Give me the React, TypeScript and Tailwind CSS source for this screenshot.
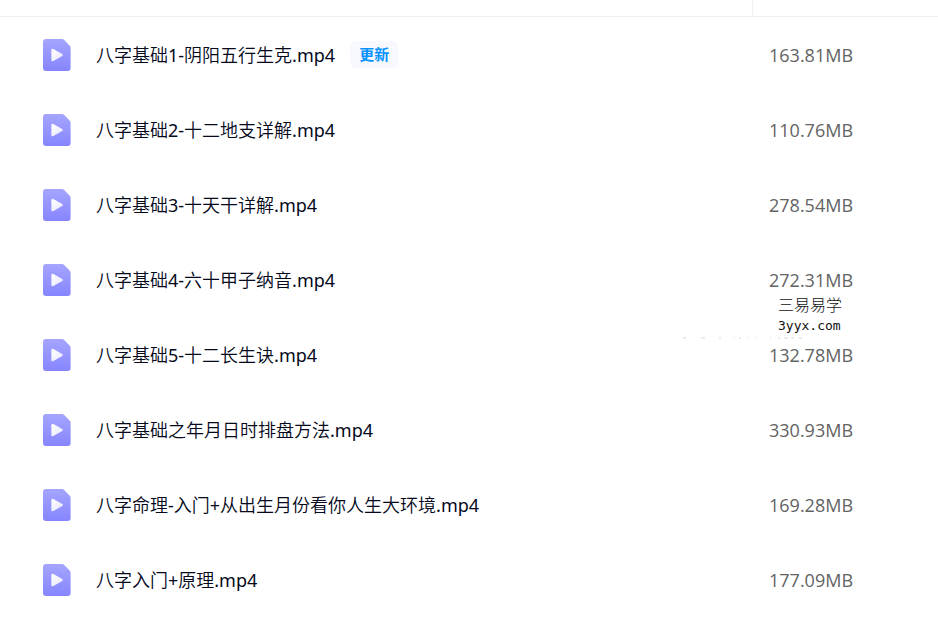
import React from 'react';

interface VideoFile {
  name: string;
  size: string;
  updated?: boolean;
}

const files: VideoFile[] = [
  { name: '八字基础1-阴阳五行生克.mp4', size: '163.81MB', updated: true },
  { name: '八字基础2-十二地支详解.mp4', size: '110.76MB' },
  { name: '八字基础3-十天干详解.mp4', size: '278.54MB' },
  { name: '八字基础4-六十甲子纳音.mp4', size: '272.31MB' },
  { name: '八字基础5-十二长生诀.mp4', size: '132.78MB' },
  { name: '八字基础之年月日时排盘方法.mp4', size: '330.93MB' },
  { name: '八字命理-入门+从出生月份看你人生大环境.mp4', size: '169.28MB' },
  { name: '八字入门+原理.mp4', size: '177.09MB' },
];

const VideoIcon: React.FC = () => (
  <svg className="h-8 w-7 shrink-0" viewBox="0 0 28 32" aria-hidden="true">
    <defs>
      <linearGradient id="sheet" x1="0" y1="0" x2="0" y2="1">
        <stop offset="0" stopColor="#a5a5ff" />
        <stop offset="1" stopColor="#8685ff" />
      </linearGradient>
      <linearGradient id="play" x1="0" y1="0" x2="1" y2="1">
        <stop offset="0" stopColor="#ffffff" />
        <stop offset="1" stopColor="#e6e6ff" />
      </linearGradient>
    </defs>
    <path d="M3 0H19Q20.2 0 21 .8L26.8 6.8Q27.6 7.7 27.6 8.8V29Q27.6 32 24.6 32H3Q0 32 0 29V3Q0 0 3 0Z" fill="url(#sheet)" />
    <path d="M8.4 11.2Q8.4 9 10.4 10L19.2 14.9Q20.8 16 19.2 17.1L10.4 22Q8.4 23 8.4 20.8Z" fill="url(#play)" />
  </svg>
);

// Site mark that floats over the size column
const Watermark: React.FC = () => (
  <div className="pointer-events-none absolute left-[9px] top-full whitespace-nowrap text-[#111]">
    <div className="font-['Noto_Sans_CJK_SC',sans-serif] text-[16px] leading-6 font-light">三易易学</div>
    <div className="font-['DejaVu_Sans_Mono',monospace] text-[13px] leading-5">3yyx.com</div>
    <svg className="absolute right-[38px] top-[45px] h-[2px] w-[124px]" viewBox="0 0 124 2" aria-hidden="true">
      <path d="M3 1h3M21 1h4M39 1h2M54 1h1M59 1h2M67 1h1M75 1h1M90 1h1M98 1h2M104 1h4M111 1h3M119 1h3" stroke="#d8d8d8" />
    </svg>
  </div>
);

const FileRow: React.FC<{ file: VideoFile; marked: boolean }> = ({ file, marked }) => (
  <tr className="h-[75px]">
    <td className="pl-[43px]">
      <div className="flex items-center">
        <VideoIcon />
        <a href="#" className="ml-[25px] whitespace-nowrap font-['Noto_Sans','Noto_Sans_CJK_SC_DemiLight','Noto_Sans_CJK_SC',sans-serif] text-[18px] leading-6 text-[#03081a]">{file.name}</a>
        {file.updated && (
          <span className="ml-[15px] rounded-md bg-[#f8f9ff] px-[9px] text-[15px] leading-[27px] font-bold text-[#0692ff]">更新</span>
        )}
      </div>
    </td>
    <td className="pl-4 text-[18px] leading-6 text-[#636363]">
      <div className="relative">
        {file.size}
        {marked && <Watermark />}
      </div>
    </td>
  </tr>
);

export default function App() {
  return (
    <main className="min-h-screen bg-white font-['Open_Sans','Noto_Sans_CJK_SC',sans-serif]">
      <table className="w-full table-fixed border-separate border-spacing-0">
        <colgroup>
          <col />
          <col className="w-[185px]" />
        </colgroup>
        <thead>
          <tr className="h-[17px]">
            <th className="border-r border-b border-[#f0f0f0]" />
            <th className="border-b border-[#f0f0f0]" />
          </tr>
        </thead>
        <tbody>
          {files.map((file, index) => (
            <FileRow key={file.name} file={file} marked={index === 3} />
          ))}
        </tbody>
      </table>
    </main>
  );
}
